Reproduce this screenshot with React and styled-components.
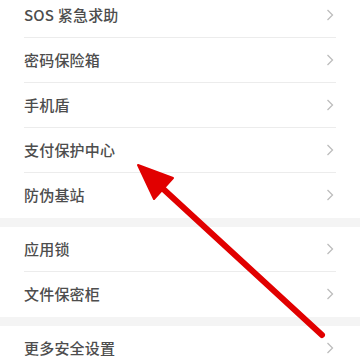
import React from "react";
import styled, { createGlobalStyle } from "styled-components";

const Global = createGlobalStyle`
  html, body { margin: 0; padding: 0; background: #fff; }
  body { width: 360px; height: 360px; overflow: hidden; font-family: "Noto Sans CJK SC", "Noto Sans", sans-serif; }
`;

const Page = styled.div`
  position: relative;
  width: 360px;
  height: 360px;
  overflow: hidden;
  background: #fff;
`;

const List = styled.div`
  display: flex;
  flex-direction: column;
  margin-top: -7px;
`;

const Group = styled.div`
  display: flex;
  flex-direction: column;
  background: #fff;
`;

const Band = styled.div`
  height: 9px;
  background: #f4f4f4;
`;

const Row = styled.div`
  display: flex;
  align-items: center;
  justify-content: space-between;
  height: 44px;
  margin: 0 24px;
  border-bottom: ${(p) => (p.$last ? "none" : "1px solid #ececec")};
  padding-bottom: ${(p) => (p.$last ? "1px" : "0")};
`;

const Label = styled.span`
  font-size: 15px;
  line-height: 20px;
  color: #4d4d4d;
  letter-spacing: 0.2px;
  font-weight: 500;
`;

const Chevron = styled.svg`
  width: 8px;
  height: 12px;
  margin-right: 2px;
`;

const Arrow = styled.svg`
  position: absolute;
  left: 0;
  top: 0;
  width: 360px;
  height: 360px;
  pointer-events: none;
`;

const groups = [
  ["SOS 紧急求助", "密码保险箱", "手机盾", "支付保护中心", "防伪基站"],
  ["应用锁", "文件保密柜"],
  ["更多安全设置"],
];

function Item({ label, last }) {
  return (
    <Row $last={last}>
      <Label>{label}</Label>
      <Chevron viewBox="0 0 8 12">
        <path d="M1.5 1 L6.5 6 L1.5 11" fill="none" stroke="#bdbdbd" strokeWidth="1.3" />
      </Chevron>
    </Row>
  );
}

export default function App() {
  return (
    <Page>
      <Global />
      <List>
        {groups.map((g, gi) => (
          <React.Fragment key={gi}>
            {gi > 0 && <Band />}
            <Group>
              {g.map((l, i) => (
                <Item key={l} label={l} last={i === g.length - 1} />
              ))}
            </Group>
          </React.Fragment>
        ))}
      </List>
      <Arrow viewBox="0 0 360 360">
        <line x1="160" y1="186" x2="322" y2="335" stroke="#e10000" strokeWidth="6" strokeLinecap="round" />
        <polygon points="138,165 154,199 173,178" fill="#e10000" stroke="#e10000" strokeWidth="2" strokeLinejoin="round" />
      </Arrow>
    </Page>
  );
}
